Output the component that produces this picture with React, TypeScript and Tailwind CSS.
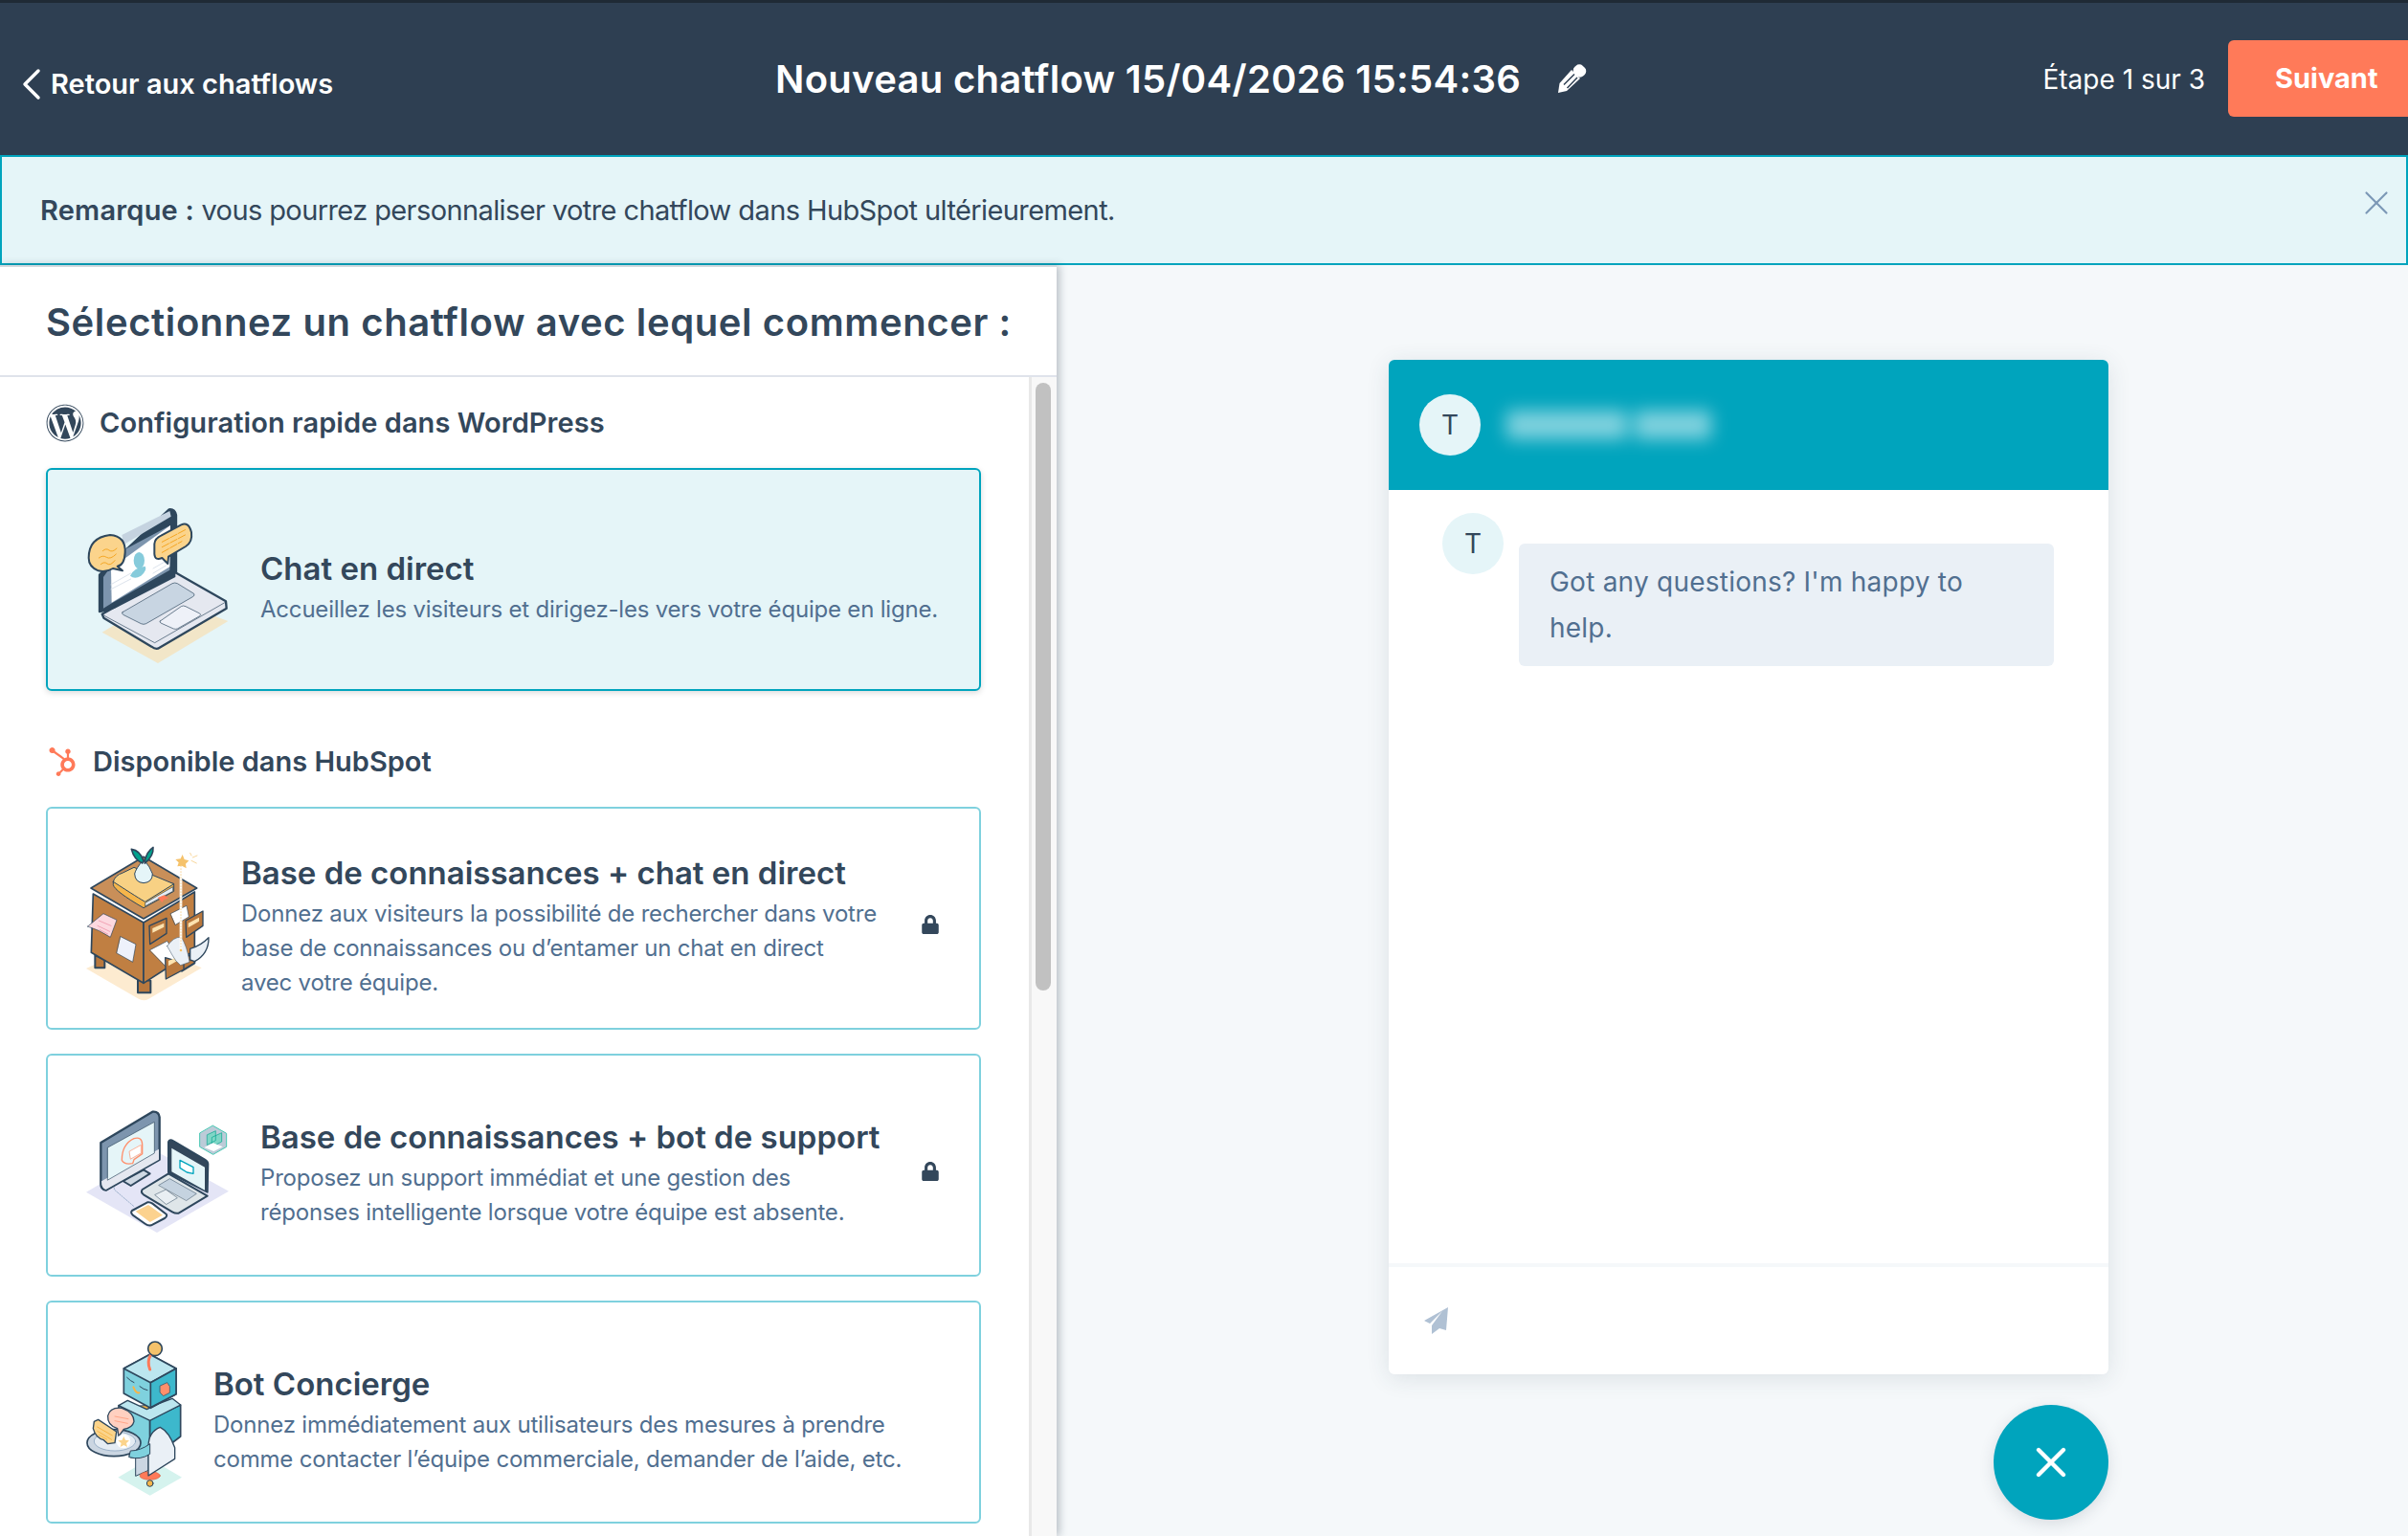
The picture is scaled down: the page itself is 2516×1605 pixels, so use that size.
import { ChevronLeft, X } from 'lucide-react';
import { FaHubspot, FaLock, FaWordpress } from 'react-icons/fa';

const ink = '#2e475d';

function LaptopArt() {
    return (
        <svg viewBox="150 150 450 495" className="h-[165px] w-[150px] shrink-0" fill="none" strokeLinejoin="round" strokeLinecap="round">
            <path d="M200 545 L250 515 L540 490 L595 510 L375 642 Z" fill="#f2e6c8" />
            <path d="M192 480 L192 365 L410 160 Q428 158 432 178 L432 360 L240 470 Z" fill="#2e475d" stroke={ink} strokeWidth="7" />
            <path d="M262 240 L412 165 L416 182 L268 270 Z" fill="#c5d3e0" />
            <path d="M204 372 L262 290 L414 210 L412 350 L228 455 L204 470 Z" fill="#7d95ae" />
            <path d="M228 345 L414 210 L412 340 L230 452 Z" fill="#fff" />
            <path d="M228 395 L290 360 M228 410 L290 378 M360 345 L400 322 M360 360 L400 336" stroke="#dce3ec" strokeWidth="3" />
            <ellipse cx="316" cy="320" rx="17" ry="26" fill="#86cbdb" />
            <path d="M288 368 Q300 342 335 338 Q342 350 322 368 Q302 380 288 368 Z" fill="#86cbdb" />
            <path d="M200 488 L430 358 L588 448 L590 470 L375 596 Q365 598 355 590 L205 500 Z" fill="#e5e8f0" stroke={ink} strokeWidth="7" />
            <path d="M205 482 L430 358 L430 372 L240 470 Z" fill="#2e475d" />
            <path d="M205 492 L365 578 L588 450" stroke={ink} strokeWidth="2" />
            <path d="M264 482 L420 392 Q428 388 436 392 L488 424 Q492 430 484 434 L338 518 Q330 522 322 518 L266 490 Q260 486 264 482 Z" fill="#c8d5e2" stroke={ink} strokeWidth="2" />
            <path d="M382 510 L448 464 Q454 460 462 464 L506 486 Q512 490 506 494 L436 534 Q430 536 424 534 L384 516 Q378 512 382 510 Z" fill="#eef1f8" stroke={ink} strokeWidth="2" />
            <path d="M158 312 Q158 248 225 240 Q275 244 272 295 Q270 335 248 338 L264 352 L234 345 Q212 358 188 352 Q158 340 158 312 Z" fill="#fbd48c" stroke={ink} strokeWidth="6" />
            <path d="M202 290 Q212 280 222 288 T246 282 M190 312 Q202 302 214 310 T244 300 M196 332 Q206 322 216 330 T240 320" stroke="#f5a623" strokeWidth="3" />
            <path d="M364 268 Q366 250 385 242 L448 208 Q472 198 480 232 Q484 262 462 276 L408 308 L406 330 L388 312 Q366 322 364 300 Z" fill="#fbd48c" stroke={ink} strokeWidth="6" />
            <path d="M388 262 L464 222 M388 278 L464 238 M388 295 L450 260" stroke="#f5a623" strokeWidth="3" strokeDasharray="24 5" />
        </svg>
    );
}

function CabinetArt() {
    return (
        <svg viewBox="150 375 390 495" className="h-[165px] w-[130px] shrink-0" fill="none" strokeLinejoin="round" strokeLinecap="round">
            <path d="M150 762 L330 680 L512 760 L345 858 Q330 866 312 856 Z" fill="#fdebd0" />
            <path d="M178 720 L178 760 L208 760 L208 735 Z M312 795 L312 838 L352 838 L352 800 Z M450 730 L450 770 L490 745 L490 715 Z" fill="#b9783d" stroke={ink} strokeWidth="6" />
            <path d="M172 528 L330 618 L330 808 L166 712 Z" fill="#c07f42" stroke={ink} strokeWidth="5" />
            <path d="M330 618 L490 522 L490 705 L330 808 Z" fill="#c07f42" stroke={ink} strokeWidth="5" />
            <path d="M165 510 L330 412 L497 510 L330 606 Z" fill="#c98f59" stroke={ink} strokeWidth="5" />
            <path d="M235 490 L235 500 Q240 520 330 572 L425 520 L425 497 Z" fill="#f5b54a" stroke={ink} strokeWidth="3" />
            <path d="M235 490 Q240 470 265 462 L300 445 L425 497 L335 553 Q320 545 235 490 Z" fill="#f8d184" stroke={ink} strokeWidth="3" />
            <path d="M336 556 L422 506 L422 520 L336 566 Z" fill="#e5ecf3" stroke={ink} strokeWidth="2" />
            <path d="M374 540 L395 532 L408 542 L394 546 L388 555 L380 545 Z" fill="#ff7a59" />
            <path d="M330 420 Q305 450 302 465 Q303 492 330 494 Q358 492 358 465 Q352 445 330 420 Z" fill="#e5f5f8" stroke={ink} strokeWidth="3" />
            <path d="M326 432 Q300 420 292 388 Q320 392 330 425 Z M334 425 Q340 395 360 382 Q362 410 334 432 Z" fill="#00a38d" stroke={ink} strokeWidth="5" />
            <path d="M155 630 L204 590 L246 610 L226 664 Q190 640 155 630 Z" fill="#fcd9e0" stroke={ink} strokeWidth="2" />
            <path d="M190 612 L228 628 M186 628 L224 646 M192 640 L218 654" stroke="#f2a3b5" strokeWidth="3" />
            <path d="M258 662 L306 686 L296 742 L246 714 Z" fill="#eef1fb" stroke={ink} strokeWidth="2" />
            <path d="M348 628 L402 604 L402 652 L350 686 Z" fill="#b9783d" stroke={ink} strokeWidth="4" />
            <path d="M358 636 L394 620 L394 632 L358 650 Z" fill="#fce3b0" />
            <path d="M415 590 L465 565 L472 600 L430 625 Z" fill="#fff" stroke={ink} strokeWidth="2" />
            <path d="M462 612 L516 582 L516 628 L464 664 Z" fill="#b9783d" stroke={ink} strokeWidth="4" />
            <path d="M470 620 L504 602 L504 614 L470 634 Z" fill="#fce3b0" />
            <path d="M350 704 L404 676 L440 730 L400 755 Z" fill="#fff" stroke={ink} strokeWidth="2" />
            <path d="M398 728 L456 745 L456 765 L400 795 Z" fill="#b9783d" stroke={ink} strokeWidth="4" />
            <path d="M408 738 L436 726 L436 738 L408 754 Z" fill="#fce3b0" />
            <path d="M404 692 Q424 662 448 664 Q466 690 474 742 L446 752 Q430 740 420 720 Q410 702 404 692 Z" fill="#eaf0f6" stroke={ink} strokeWidth="1.5" />
            <path d="M476 700 Q510 690 534 665 Q535 715 490 740 L476 735 Z" fill="#eaf0f6" stroke={ink} strokeWidth="4" />
            <path d="M447 440 L447 705" stroke="#fff" strokeWidth="8" />
            <path d="M447 440 L447 705" stroke="#f5c26b" strokeWidth="2" strokeDasharray="3 6" />
            <path d="M452 405 L458 420 L472 424 L462 434 L464 448 L450 440 L436 442 L440 430 L430 420 L446 418 Z" fill="#f5c26b" />
            <path d="M476 400 L480 408 M498 408 L484 414 M496 432 L480 424" stroke="#f5c26b" strokeWidth="2" />
            <circle cx="447" cy="705" r="4" fill="#f5c26b" />
        </svg>
    );
}

function DevicesArt() {
    return (
        <svg viewBox="150 180 450 390" className="h-[130px] w-[150px] shrink-0" fill="none" strokeLinejoin="round" strokeLinecap="round">
            <path d="M150 440 L370 312 L597 437 L372 567 Z" fill="#e4e5f6" />
            <path d="M238 345 L238 432 L300 485" stroke="#7c98b6" strokeWidth="2" strokeDasharray="5 4" />
            <path d="M265 405 L330 370 L350 382 L290 420 Z" fill="#cfd9e4" stroke={ink} strokeWidth="6" />
            <path d="M196 285 L358 188 Q378 186 380 205 L380 338 L212 434 Q196 432 196 415 Z" fill="#7d95ae" stroke={ink} strokeWidth="7" />
            <path d="M198 406 L378 305 L378 338 L212 432 Q198 428 198 406 Z" fill="#e5e8f0" />
            <path d="M218 300 L364 220 L364 318 L218 402 Z" fill="#e5f5f8" stroke={ink} strokeWidth="2" />
            <path d="M262 340 Q262 290 300 272 Q325 265 326 290 L326 320 L300 338 L296 350 Q270 355 262 340 Z" stroke="#ff8f6b" strokeWidth="4" />
            <path d="M286 312 L322 292 L322 318 L290 336 Z" fill="#fff" stroke="#ff8f6b" strokeWidth="2" />
            <path d="M408 282 Q412 272 424 280 L522 338 Q532 344 532 352 L530 440 L408 378 Z" fill="#33475b" stroke={ink} strokeWidth="6" />
            <path d="M418 302 L522 362 L522 434 L418 376 Z" fill="#e5f5f8" />
            <path d="M444 340 L486 362 L486 382 L466 378 L444 364 Z" fill="#fff" stroke="#00a4bd" strokeWidth="4" />
            <path d="M326 432 L408 382 L530 452 L440 506 Q430 508 420 502 L330 448 Q320 440 326 432 Z" fill="#dfe6e9" stroke={ink} strokeWidth="6" />
            <path d="M378 418 L412 398 L496 445 L465 466 Z" fill="#c5d3e0" stroke={ink} strokeWidth="1.5" />
            <path d="M366 448 L400 432 L436 458 L402 478 Z" fill="#e9eff3" stroke={ink} strokeWidth="1.5" />
            <path d="M294 498 L342 472 Q350 470 358 476 L402 510 Q404 518 396 522 L354 544 Q344 546 336 540 L296 512 Q288 504 294 498 Z" fill="#fff" stroke={ink} strokeWidth="6" />
            <path d="M305 500 L345 480 L390 512 L350 534 Z" fill="#fcd28f" />
            <path d="M548 232 L590 256 L590 298 L548 322 L506 298 L506 256 Z" fill="#bccbd8" stroke="#45c7b2" strokeWidth="3" />
            <path d="M530 260 L556 248 L556 278 L530 292 Z M545 268 L575 254 L575 282 L545 298 Z" fill="#7fd6c6" stroke="#00a38d" strokeWidth="2" />
            <path d="M520 300 L548 286 L578 298 L550 312 Z" fill="#fff" />
        </svg>
    );
}

function RobotArt() {
    return (
        <svg viewBox="150 125 300 486" className="h-[162px] w-[100px] shrink-0" fill="none" strokeLinejoin="round" strokeLinecap="round">
            <path d="M250 553 L350 495 L450 553 L350 610 Z" fill="#d5f3ee" />
            <path d="M320 330 Q350 370 382 325 Z" fill="#f5b54a" stroke={ink} strokeWidth="3" />
            <path d="M252 328 L350 372 L350 498 L290 490 L252 420 Z" fill="#7fd1de" stroke={ink} strokeWidth="5" />
            <path d="M350 372 L446 326 L446 425 L350 498 Z" fill="#3db8cc" stroke={ink} strokeWidth="5" />
            <path d="M252 328 L280 312 L340 340 L382 320 L420 306 L446 326 L350 375 Z" fill="#bce6ef" stroke={ink} strokeWidth="4" />
            <path d="M268 212 L350 168 L432 212 L432 292 L352 336 L268 290 Z" fill="#7fd1de" stroke={ink} strokeWidth="5" />
            <path d="M268 212 L350 168 L432 212 L352 256 Z" fill="#bce6ef" stroke={ink} strokeWidth="5" />
            <path d="M352 256 L432 212 L432 292 L352 334 Z" fill="#3db8cc" stroke={ink} strokeWidth="5" />
            <path d="M278 240 Q290 252 300 256 M318 268 Q330 278 342 280" stroke={ink} strokeWidth="3" />
            <path d="M298 270 Q306 290 316 288" stroke="#f5b54a" strokeWidth="6" />
            <path d="M382 266 L404 256 L412 268 L412 288 L392 298 L382 288 Z" fill="#ff8f6b" stroke={ink} strokeWidth="2" />
            <path d="M350 215 Q340 190 352 170" stroke="#ff7a59" strokeWidth="9" />
            <circle cx="366" cy="150" r="22" fill="#f5c26b" stroke={ink} strokeWidth="5" />
            <path d="M305 548 L305 490 L345 465 L345 530 Z" fill="#cbd6e2" stroke={ink} strokeWidth="3" />
            <ellipse cx="350" cy="548" rx="32" ry="13" fill="#ff7a59" stroke="#d9603f" strokeWidth="2" />
            <circle cx="350" cy="572" r="10" fill="#f5b54a" stroke={ink} strokeWidth="3" />
            <path d="M345 455 Q346 410 382 396 Q410 410 428 460 L428 495 L345 548 Z" fill="#eaf0f6" stroke={ink} strokeWidth="4" />
            <ellipse cx="237" cy="445" rx="84" ry="42" fill="#cbd6e2" stroke={ink} strokeWidth="5" />
            <ellipse cx="240" cy="440" rx="65" ry="30" fill="#e5ecf3" stroke="#7c98b6" strokeWidth="2" />
            <path d="M290 470 Q320 470 350 448 L350 480 Q320 500 285 490 Z" fill="#7fd1de" stroke={ink} strokeWidth="3" />
            <path d="M175 378 L188 372 L245 410 L240 445 L218 448 L205 436 Q180 430 172 400 Z" fill="#fbd48c" stroke={ink} strokeWidth="4" />
            <path d="M185 395 L232 422 M185 408 L230 435 M190 420 L215 434" stroke="#f5a623" strokeWidth="2" />
            <path d="M218 360 Q225 332 262 336 Q300 350 300 378 Q295 398 268 402 L252 425 L248 400 Q216 390 218 360 Z" fill="#ffd0c0" stroke={ink} strokeWidth="4" />
            <path d="M240 362 L282 370 M240 376 L280 384" stroke="#ff8f6b" strokeWidth="2" />
            <circle cx="267" cy="440" r="22" fill="#fff" />
            <path d="M268 425 L273 436 L285 438 L276 446 L279 458 L268 452 L257 458 L260 446 L250 438 L263 436 Z" fill="#fbd48c" />
        </svg>
    );
}

function Card({ art, title, lines, active, locked, gap }: { art: React.ReactNode; title: string; lines: string[]; active?: boolean; locked?: boolean; gap: string }) {
    return (
        <div className={`flex h-[233px] items-center rounded-[6px] border-2 pt-[12px] pl-[40px] ${active ? 'border-[#00a4bd] bg-[#e5f5f8] shadow-[0_2px_6px_rgba(0,0,0,0.15)]' : 'border-[#7fd1de] bg-white'}`}>
            {art}
            <div className={gap}>
                <h3 className="text-[33px] leading-[48px] font-semibold text-[#33475b]">{title}</h3>
                {lines.map((line) => (
                    <p key={line} className="relative top-[1px] text-[24px] leading-[36px] tracking-[-0.2px] text-[#516f90]">{line}</p>
                ))}
            </div>
            {locked && <FaLock className="mr-[41px] ml-auto h-[20px] w-[20px] text-[#33475b]" />}
        </div>
    );
}

export default function App() {
    return (
        <div className="flex h-[1605px] w-[2516px] flex-col overflow-hidden bg-[#f5f8fa] font-['Inter','Noto_Sans',sans-serif] text-[#33475b]">
            <header className="flex h-[162px] shrink-0 items-center justify-between border-t-[3px] border-[#1f2a35] bg-[#2e3f52]">
                <a className="flex w-[810px] items-center pt-[10px] pl-[5px] text-[29px] font-semibold text-white">
                    <ChevronLeft className="h-[56px] w-[56px] shrink-0" strokeWidth={1.5} />
                    <span className="-ml-[8px]">Retour aux chatflows</span>
                </a>
                <div className="flex flex-1 items-center">
                    <h1 className="text-[40px] font-semibold tracking-[0.3px] text-white">Nouveau chatflow 15/04/2026 15:54:36</h1>
                    <svg viewBox="26 16 36 32" className="ml-[36px] h-[32px] w-[36px]" fill="#fff">
                        <rect x="45" y="17" width="13" height="12" rx="5" transform="rotate(45 51.5 23)" />
                        <path d="M43 22 L52 31 L38 44 L29 46 L30.5 36 Z" />
                        <path d="M35 37.5 L46 26.5 M38.5 41 L49 30" stroke="#2e3f52" strokeWidth="1.5" />
                    </svg>
                </div>
                <div className="flex items-center">
                    <span className="mr-[24px] text-[28px] text-white">Étape 1 sur 3</span>
                    <button className="mb-[1px] h-[80px] w-[188px] rounded-l-[6px] bg-[#ff7a59] pl-[49px] text-left text-[29px] font-bold text-white">Suivant</button>
                </div>
            </header>

            <div className="flex h-[115px] shrink-0 items-center justify-between border-2 border-[#00a4bd] bg-[#e5f5f8] pr-[10px] pl-[40px]">
                <p className="text-[29px] tracking-[-0.6px] text-[#33475b]"><strong className="font-semibold tracking-[0.2px]">Remarque :</strong> vous pourrez personnaliser votre chatflow dans HubSpot ultérieurement.</p>
                <X className="mb-[16px] h-[42px] w-[42px] text-[#7c98b6]" strokeWidth={1.25} />
            </div>

            <main className="flex min-h-0 flex-1">
                <section className="relative z-10 flex w-[1104px] shrink-0 flex-col bg-white shadow-[3px_0_8px_rgba(45,62,80,0.3)]">
                    <div className="flex h-[117px] shrink-0 items-center border-t-2 border-b-2 border-t-[#d5d9de] border-b-[#dfe3eb] pt-[3px] pl-[48px]">
                        <h2 className="text-[40px] font-semibold tracking-[0.6px] text-[#33475b]">Sélectionnez un chatflow avec lequel commencer :</h2>
                    </div>
                    <div className="flex min-h-0 flex-1">
                        <div className="flex w-[1075px] shrink-0 flex-col pr-[50px] pl-[48px]">
                            <div className="flex h-[95px] shrink-0 items-center gap-[16px]">
                                <FaWordpress className="h-[40px] w-[40px] text-[#33475b]" />
                                <h3 className="text-[29px] font-semibold tracking-[0.07px]">Configuration rapide dans WordPress</h3>
                            </div>
                            <Card active art={<LaptopArt />} gap="ml-[32px]" title="Chat en direct" lines={['Accueillez les visiteurs et dirigez-les vers votre équipe en ligne.']} />
                            <div className="flex h-[121px] shrink-0 items-center gap-[17px] pt-[26px] pl-[2px]">
                                <FaHubspot className="h-[30px] w-[30px] text-[#ff7a59]" />
                                <h3 className="text-[29px] font-semibold tracking-[0px]">Disponible dans HubSpot</h3>
                            </div>
                            <div className="flex flex-col gap-[25px]">
                                <Card locked art={<CabinetArt />} gap="ml-[32px]" title="Base de connaissances + chat en direct" lines={['Donnez aux visiteurs la possibilité de rechercher dans votre', 'base de connaissances ou d’entamer un chat en direct', 'avec votre équipe.']} />
                                <Card locked art={<DevicesArt />} gap="ml-[32px]" title="Base de connaissances + bot de support" lines={['Proposez un support immédiat et une gestion des', 'réponses intelligente lorsque votre équipe est absente.']} />
                                <Card art={<RobotArt />} gap="ml-[33px]" title="Bot Concierge" lines={['Donnez immédiatement aux utilisateurs des mesures à prendre', 'comme contacter l’équipe commerciale, demander de l’aide, etc.']} />
                            </div>
                        </div>
                        <div className="flex-1 border-l-[3px] border-[#e8e8e8] bg-[#f8f8f8] pt-[6px] pl-[4px]">
                            <div className="h-[635px] w-[16px] rounded-full bg-[#c1c1c1]" />
                        </div>
                    </div>
                </section>

                <section className="flex flex-1 flex-col items-start pt-[99px] pl-[347px]">
                    <div className="flex h-[1060px] w-[752px] flex-col overflow-hidden rounded-[6px] bg-white shadow-[0_4px_24px_rgba(45,62,80,0.12)]">
                        <div className="flex h-[136px] shrink-0 items-center bg-[#00a4bd] pl-[32px]">
                            <div className="flex h-[64px] w-[64px] items-center justify-center rounded-full bg-[#e5f5f8] text-[28px]">T</div>
                            <div className="ml-[27px] flex gap-[8px] blur-[9px]">
                                <div className="h-[30px] w-[126px] rounded bg-white/50" />
                                <div className="h-[30px] w-[80px] rounded bg-white/50" />
                            </div>
                        </div>
                        <div className="flex flex-1 items-start pt-[24px] pl-[56px]">
                            <div className="flex h-[64px] w-[64px] shrink-0 items-center justify-center rounded-full bg-[#e5f5f8] text-[28px]">T</div>
                            <div className="mt-[32px] ml-[16px] h-[128px] w-[559px] rounded-[6px] bg-[#eaf0f6] px-[32px] py-[16px] text-[28px] leading-[48px] tracking-[0.23px] text-[#516f90]">
                                Got any questions? I'm happy to<br />help.
                            </div>
                        </div>
                        <div className="flex h-[116px] shrink-0 items-center border-t-4 border-[#f5f8fa] pl-[37px]">
                            <svg viewBox="0 0 25 28" className="h-[28px] w-[25px]" fill="#b0c1d4">
                                <path d="M25 0 L23 24 L16 22 L8 28 L8 19 L19 4 L6 17 L0 14 Z" />
                            </svg>
                        </div>
                    </div>
                    <div className="mt-[32px] ml-[632px] flex h-[120px] w-[120px] shrink-0 items-center justify-center rounded-full bg-[#00a4bd] shadow-[0_4px_16px_rgba(45,62,80,0.15)]">
                        <X className="h-[52px] w-[52px] text-white" strokeWidth={2} />
                    </div>
                </section>
            </main>
        </div>
    );
}
